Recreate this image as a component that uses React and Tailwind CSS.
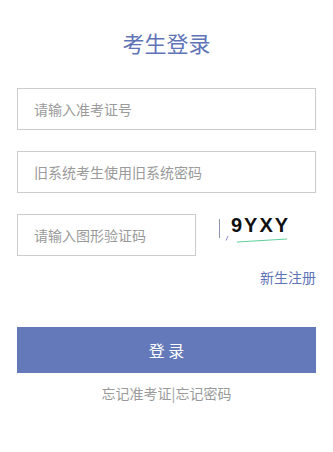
export default function App() {
  const font = { fontFamily: '"Noto Sans CJK SC", "Noto Sans", sans-serif' };
  return (
    <div className="w-[333px] h-[452px] bg-white px-[17px] flex flex-col" style={font}>
      <div className="mt-[26px] h-[32px] leading-[32px] text-center text-[22px] text-[#5f74b7]">考生登录</div>
      <input
        className="mt-[30px] h-[42px] w-full border border-[#cccccc] pl-[16px] text-[14px] outline-none placeholder:text-[#9a9a9a]"
        placeholder="请输入准考证号"
      />
      <input
        className="mt-[21px] h-[42px] w-full border border-[#cccccc] pl-[16px] text-[14px] outline-none placeholder:text-[#9a9a9a]"
        placeholder="旧系统考生使用旧系统密码"
      />
      <div className="mt-[21px] flex items-start">
        <input
          className="h-[42px] w-[179px] border border-[#cccccc] pl-[16px] text-[14px] outline-none placeholder:text-[#9a9a9a]"
          placeholder="请输入图形验证码"
        />
        <div className="relative ml-[23px] mt-[1px] h-[28px] w-[72px]">
          <span
            className="block h-[20px] pl-[12px] text-[20px] leading-[20px] font-bold tracking-[2px] text-[#111]"
            style={{ fontFamily: '"Liberation Sans", Arial, sans-serif' }}
          >
            9YXY
          </span>
          <svg className="absolute inset-0" width="72" height="28" viewBox="0 0 72 28">
            <line x1="0.5" y1="4" x2="0.5" y2="23" stroke="#8a93b0" strokeWidth="1" />
            <line x1="18" y1="27" x2="68" y2="24" stroke="#5fcf9a" strokeWidth="1" />
            <line x1="7" y1="25.5" x2="9" y2="21" stroke="#9a86d6" strokeWidth="1" />
          </svg>
        </div>
      </div>
      <div className="mt-[11px] h-[20px] leading-[20px] text-right text-[14px] text-[#5f74b7]">新生注册</div>
      <button className="mt-[40px] h-[46px] w-full bg-[#6479ba] text-white text-[16px]">登&nbsp;录</button>
      <div className="mt-[10px] h-[20px] leading-[20px] text-center text-[14px] text-[#9a9a9a]">忘记准考证|忘记密码</div>
    </div>
  );
}
